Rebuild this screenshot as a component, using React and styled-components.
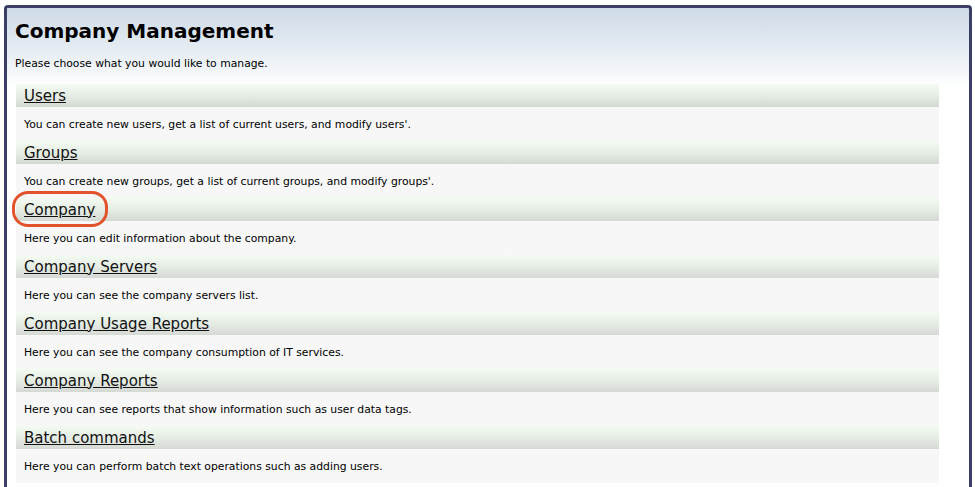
import styled, { createGlobalStyle } from "styled-components";

const GlobalStyle = createGlobalStyle`
  html, body {
    margin: 0;
    padding: 0;
    background: #ffffff;
  }
  body {
    font-family: "DejaVu Sans", Verdana, sans-serif;
    color: #000;
  }
`;

const Panel = styled.div`
  position: relative;
  margin: 5px 3px 0 4px;
  height: 490px;
  border: 3px solid #3b3f66;
  border-bottom: none;
  border-radius: 4px 4px 0 0;
  padding: 0 30px 0 8px;
  background: linear-gradient(#cfdbe8 0px, #e4ebf2 40px, #ffffff 80px);
`;

const Title = styled.h1`
  margin: 0;
  padding-top: 11px;
  font-size: 20px;
  font-weight: bold;
  line-height: 25px;
`;

const Intro = styled.p`
  margin: 13px 0 13px;
  font-size: 10.8px;
  line-height: 14px;
`;

const Section = styled.div`
  margin-left: 1px;
`;

const SectionHead = styled.div`
  height: 23px;
  padding-left: 8px;
  background: linear-gradient(#f3fbf2, #e4ebe3 55%, #d5d9d4);
  display: flex;
  align-items: center;
`;

const SectionLink = styled.a`
  color: #111;
  font-size: 15px;
  text-decoration: underline;
  cursor: pointer;
`;

const SectionText = styled.div`
  height: 34px;
  padding-left: 8px;
  background: #f7f7f7;
  font-size: 10.8px;
  display: flex;
  align-items: center;
`;

const Highlight = styled.div`
  position: absolute;
  left: 5px;
  top: 183px;
  width: 90px;
  height: 30px;
  border: 3.5px solid #e2532d;
  border-radius: 16px;
  pointer-events: none;
`;

const sections = [
  { name: "Users", text: "You can create new users, get a list of current users, and modify users'." },
  { name: "Groups", text: "You can create new groups, get a list of current groups, and modify groups'." },
  { name: "Company", text: "Here you can edit information about the company." },
  { name: "Company Servers", text: "Here you can see the company servers list." },
  { name: "Company Usage Reports", text: "Here you can see the company consumption of IT services." },
  { name: "Company Reports", text: "Here you can see reports that show information such as user data tags." },
  { name: "Batch commands", text: "Here you can perform batch text operations such as adding users." },
];

export default function App() {
  return (
    <>
      <GlobalStyle />
      <Panel>
        <Title>Company Management</Title>
        <Intro>Please choose what you would like to manage.</Intro>
        {sections.map((s) => (
          <Section key={s.name}>
            <SectionHead>
              <SectionLink>{s.name}</SectionLink>
            </SectionHead>
            <SectionText>{s.text}</SectionText>
          </Section>
        ))}
        <Highlight />
      </Panel>
    </>
  );
}
